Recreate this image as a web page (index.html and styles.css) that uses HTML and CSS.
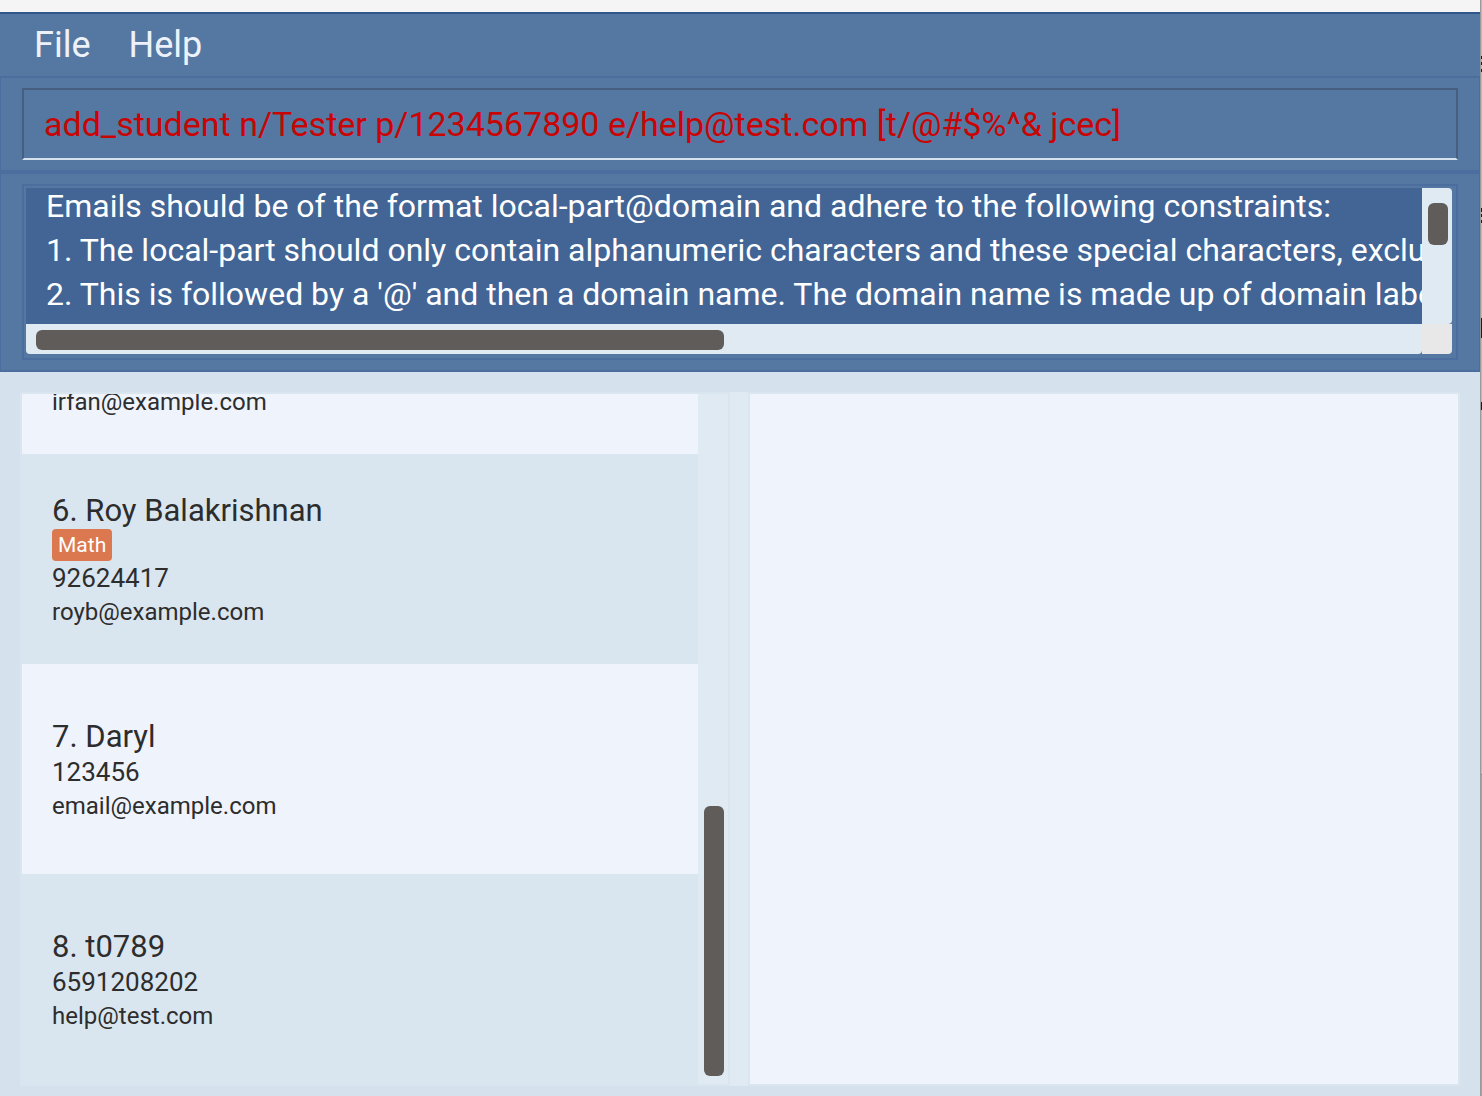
FILE: index.html
```html
<!DOCTYPE html>
<html lang="en">
<head>
<meta charset="utf-8">
<title>Student List</title>
<link rel="stylesheet" href="styles.css">
</head>
<body>
<div class="window">
  <div class="titlebar"></div>
  <nav class="menubar">
    <button class="menu" type="button">File</button>
    <button class="menu" type="button">Help</button>
  </nav>
  <form class="command-pane">
    <input class="command" type="text" aria-label="Command" value="add_student n/Tester p/1234567890 e/help@test.com [t/@#$%^&amp; jcec]">
  </form>
  <section class="result-pane">
    <div class="result">
      <div class="result-view">
        <textarea class="result-text" rows="3" wrap="off" readonly aria-label="Result">Emails should be of the format local-part@domain and adhere to the following constraints:
1. The local-part should only contain alphanumeric characters and these special characters, excluding
2. This is followed by a '@' and then a domain name. The domain name is made up of domain labels</textarea>
      </div>
      <div class="track track-v track-result"><div class="thumb" style="height: 37%"></div></div>
      <div class="track track-h"><div class="thumb" style="width: 50%"></div></div>
      <div class="corner"></div>
    </div>
  </section>
  <main class="panes">
    <section class="list-pane">
      <ol class="students">
        <li class="student">
          <p class="email">irfan@example.com</p>
        </li>
        <li class="student">
          <h2 class="name">6. Roy Balakrishnan</h2>
          <span class="tag">Math</span>
          <p class="phone">92624417</p>
          <p class="email">royb@example.com</p>
        </li>
        <li class="student">
          <h2 class="name">7. Daryl</h2>
          <p class="phone">123456</p>
          <p class="email">email@example.com</p>
        </li>
        <li class="student">
          <h2 class="name">8. t0789</h2>
          <p class="phone">6591208202</p>
          <p class="email">help@test.com</p>
        </li>
      </ol>
      <div class="track track-v track-list"><div class="thumb" style="height: 40%"></div></div>
    </section>
    <div class="divider"></div>
    <section class="detail-pane"></section>
  </main>
</div>
<div class="backdrop"></div>
</body>
</html>
```
FILE: styles.css
```css
* {
  box-sizing: border-box;
}

body {
  display: flex;
  height: 100vh;
  margin: 0;
  overflow: hidden;
  font-family: Roboto, "Liberation Sans", sans-serif;
  color: #2d2d2d;
}

.window {
  flex: 1;
  min-width: 0;
  display: flex;
  flex-direction: column;
  background: #d5e2ed;
}

.backdrop {
  width: 2px;
  border-left: 1px solid #9a9a9a;
  background: linear-gradient(
    #b9b9b9 56px, #1c1c1c 56px 59px, #b9b9b9 59px 62px, #1c1c1c 62px 65px,
    #b9b9b9 65px 69px, #1c1c1c 69px 72px, #b9b9b9 72px 208px,
    #1c1c1c 208px 212px, #b9b9b9 212px 214px, #1c1c1c 214px 217px,
    #b9b9b9 217px 220px, #1c1c1c 220px 223px, #b9b9b9 223px 318px,
    #1c1c1c 318px 338px, #b9b9b9 338px 402px, #1c1c1c 402px 410px,
    #b9b9b9 410px 774px, #8c8c8c 774px 775px, #a4a4a4 775px);
}

.titlebar {
  height: 12px;
  background: #f5f5f5;
}

.menubar {
  display: flex;
  gap: 38px;
  padding: 0 34px;
  background: #5578a2;
  border-top: 2px solid #2f5789;
  border-bottom: 2px solid #4b6e9e;
}

.menu {
  padding: 0;
  border: 0;
  background: none;
  font: inherit;
  font-size: 36px;
  line-height: 62px;
  color: #edf2fa;
}

.command-pane,
.result-pane {
  padding: 10px 21px;
  background: #5578a2;
  border: 1px solid #4b6e9e;
  border-top: 0;
  border-bottom-width: 4px;
}

.command {
  display: block;
  width: 100%;
  height: 72px;
  padding: 0 20px;
  border: 2px solid #465f80;
  border-bottom-color: #d5e2ed;
  background: none;
  font: inherit;
  font-size: 34px;
  color: #c80404;
}

.result-pane {
  border-bottom-width: 2px;
}

.result {
  display: grid;
  grid-template: 136px 30px / 1fr 30px;
  padding: 2px 4px 4px 2px;
  border: 2px solid #4b6e9e;
}

.result-view {
  overflow: hidden;
  background: #426596;
}

.result-text {
  display: block;
  width: 100%;
  height: 144px;
  margin: -4px 0;
  padding: 0 0 0 20px;
  border: 0;
  resize: none;
  overflow: hidden;
  background: none;
  font: inherit;
  font-size: 32px;
  line-height: 44px;
  color: #fff;
}

.track {
  background: #e0eaf3;
}

.thumb {
  border-radius: 6px;
  background: #605c59;
}

.track-v {
  width: 30px;
  padding: 8px 4px 8px 6px;
}

.track-result {
  padding-top: 15px;
  border-radius: 0 4px 4px 0;
}

.track-h {
  padding: 6px 10px 4px;
  border-radius: 0 0 4px 4px;
}

.track-h .thumb {
  height: 20px;
}

.track-list {
  display: flex;
  flex-direction: column;
  justify-content: flex-end;
}

.corner {
  border-radius: 0 0 4px;
  background: #e8e8e8;
}

.panes {
  flex: 1;
  min-height: 0;
  display: grid;
  grid-template-columns: calc(50% - 10px) 18px 1fr;
  padding: 20px 20px 10px;
}

.list-pane,
.detail-pane {
  min-height: 0;
  border: 2px solid #dae6ef;
  background: #eef3fc;
}

.list-pane {
  display: flex;
}

.divider {
  background: #e0eaf3;
}

.students {
  flex: 1;
  display: flex;
  flex-direction: column;
  justify-content: flex-end;
  margin: 0;
  padding: 0;
  overflow: hidden;
  list-style: none;
}

.student {
  flex: none;
  display: flex;
  flex-direction: column;
  justify-content: center;
  align-items: flex-start;
  height: 210px;
  padding: 4px 30px 0;
}

.student:first-child {
  justify-content: flex-end;
  padding-bottom: 35px;
}

.student:nth-child(even) {
  background: #dae6ef;
}

.name,
.email,
.phone {
  margin: 0;
  font-weight: 400;
}

.name {
  font-size: 31px;
  line-height: 36px;
}

.phone {
  font-size: 26px;
  line-height: 34px;
}

.email {
  font-size: 24px;
  line-height: 34px;
}

.tag {
  padding: 0 6px;
  border-radius: 4px;
  background: #dc7850;
  font-size: 21px;
  line-height: 32px;
  color: #fff;
}
```
